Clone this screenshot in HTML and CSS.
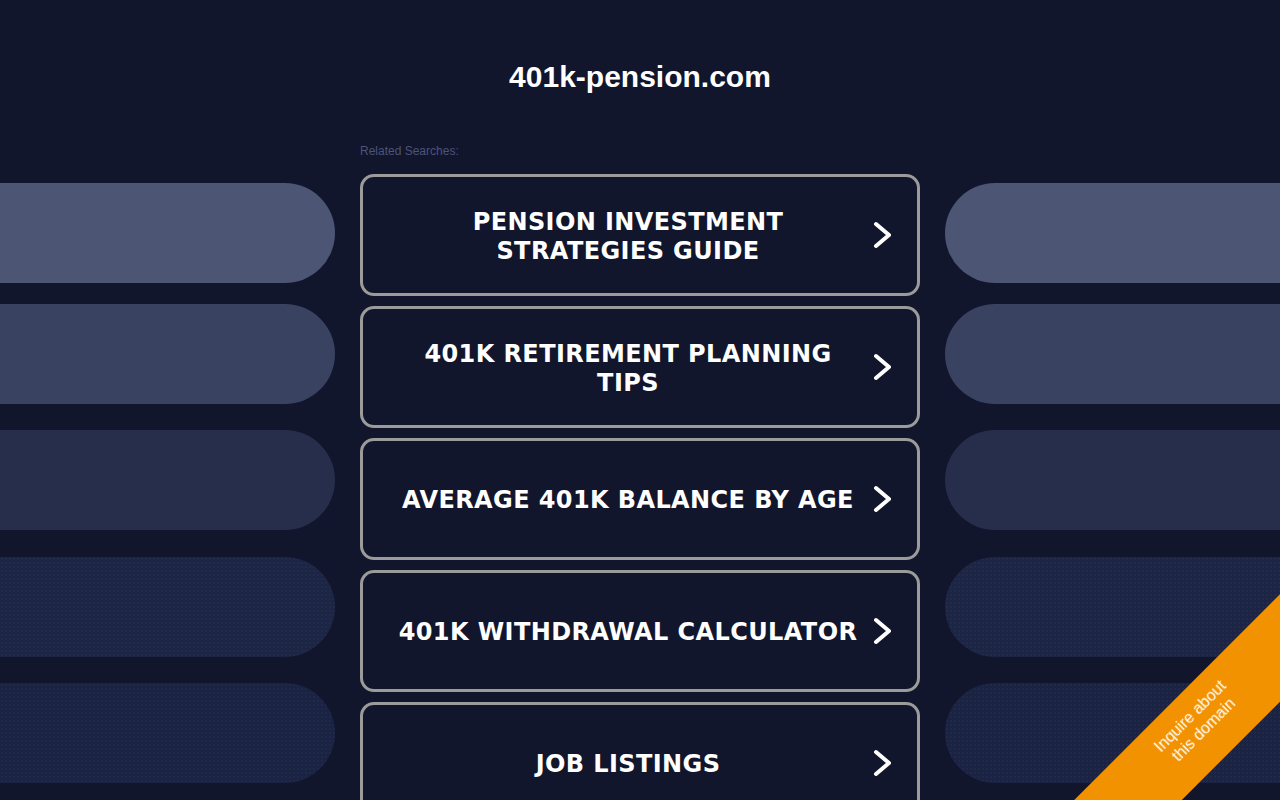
FILE: index.html
```html
<!DOCTYPE html>
<html lang="en">
<head>
<meta charset="utf-8">
<title>401k-pension.com</title>
<link rel="stylesheet" href="styles.css">
</head>
<body>
<div class="page">
  <div class="side side-left">
    <div class="pill pill-1"></div>
    <div class="pill pill-2"></div>
    <div class="pill pill-3"></div>
    <div class="pill pill-4"></div>
    <div class="pill pill-5"></div>
  </div>
  <main class="center">
    <h1 class="title">401k-pension.com</h1>
    <p class="related">Related Searches:</p>
    <a class="btn" href="#"><span class="btn-text">PENSION INVESTMENT STRATEGIES GUIDE</span><svg class="chev" viewBox="0 0 18 28" width="18" height="28"><polyline points="3,3 16,14 3,25"/></svg></a>
    <a class="btn" href="#"><span class="btn-text">401K RETIREMENT PLANNING TIPS</span><svg class="chev" viewBox="0 0 18 28" width="18" height="28"><polyline points="3,3 16,14 3,25"/></svg></a>
    <a class="btn" href="#"><span class="btn-text">AVERAGE 401K BALANCE BY AGE</span><svg class="chev" viewBox="0 0 18 28" width="18" height="28"><polyline points="3,3 16,14 3,25"/></svg></a>
    <a class="btn" href="#"><span class="btn-text">401K WITHDRAWAL CALCULATOR</span><svg class="chev" viewBox="0 0 18 28" width="18" height="28"><polyline points="3,3 16,14 3,25"/></svg></a>
    <a class="btn" href="#"><span class="btn-text">JOB LISTINGS</span><svg class="chev" viewBox="0 0 18 28" width="18" height="28"><polyline points="3,3 16,14 3,25"/></svg></a>
  </main>
  <div class="side side-right">
    <div class="pill pill-1"></div>
    <div class="pill pill-2"></div>
    <div class="pill pill-3"></div>
    <div class="pill pill-4"></div>
    <div class="pill pill-5"></div>
  </div>
</div>
<a class="ribbon" href="#"><span>Inquire about<br>this domain</span></a>
</body>
</html>
```
FILE: styles.css
```css
html, body {
  margin: 0;
  padding: 0;
}
body {
  background: #11162c;
  height: 800px;
  overflow: hidden;
  font-family: "Liberation Sans", Arial, sans-serif;
}
.page {
  display: grid;
  grid-template-columns: 1fr 560px 1fr;
  column-gap: 25px;
  height: 800px;
}
.side {
  display: flex;
  flex-direction: column;
}
.pill {
  height: 100px;
  flex: none;
}
.side-left .pill {
  border-radius: 0 50px 50px 0;
}
.side-right .pill {
  border-radius: 50px 0 0 50px;
}
.pill-1 { margin-top: 183px; background: #4c5573; }
.pill-2 { margin-top: 21px; background: #3a4261; }
.pill-3 { margin-top: 26px; background: #272e4c; }
.pill-4 {
  margin-top: 27px;
  background-color: #1d2545;
  background-image: radial-gradient(circle, rgba(80, 95, 140, 0.14) 0.6px, transparent 0.9px);
  background-size: 4px 4px;
}
.pill-5 {
  margin-top: 26px;
  background-color: #1b2343;
  background-image: radial-gradient(circle, rgba(80, 95, 140, 0.16) 0.6px, transparent 0.9px);
  background-size: 4px 4px;
}
.center {
  display: flex;
  flex-direction: column;
}
.title {
  margin: 60px 0 0;
  font-size: 30px;
  line-height: 34px;
  font-weight: bold;
  color: #ffffff;
  text-align: center;
}
.related {
  margin: 50px 0 0;
  font-size: 12px;
  line-height: 14px;
  color: #4b5479;
}
.related + .btn {
  margin-top: 16px;
}
.btn {
  box-sizing: border-box;
  height: 122px;
  margin-bottom: 10px;
  border: 3px solid #9b9b9b;
  border-radius: 14px;
  display: flex;
  align-items: center;
  padding: 0 26px 0 32px;
  text-decoration: none;
  flex: none;
}
.btn-text {
  flex: 1;
  margin-right: 12px;
  padding-top: 3px;
  text-align: center;
  font-family: "DejaVu Sans", Verdana, sans-serif;
  font-weight: bold;
  font-size: 24px;
  line-height: 29px;
  letter-spacing: 0.4px;
  color: #ffffff;
}
.chev {
  flex: none;
  display: block;
}
.chev polyline {
  fill: none;
  stroke: #ffffff;
  stroke-width: 4;
  stroke-linecap: round;
  stroke-linejoin: round;
}
.ribbon {
  position: fixed;
  left: 1001px;
  top: 689px;
  width: 400px;
  height: 76px;
  box-sizing: border-box;
  padding-bottom: 12px;
  background: #f39200;
  transform: rotate(-45deg);
  display: flex;
  align-items: center;
  justify-content: center;
  text-align: center;
  color: #ffffff;
  font-family: "Liberation Sans", Arial, sans-serif;
  font-size: 16px;
  line-height: 19px;
  text-decoration: none;
}
```
